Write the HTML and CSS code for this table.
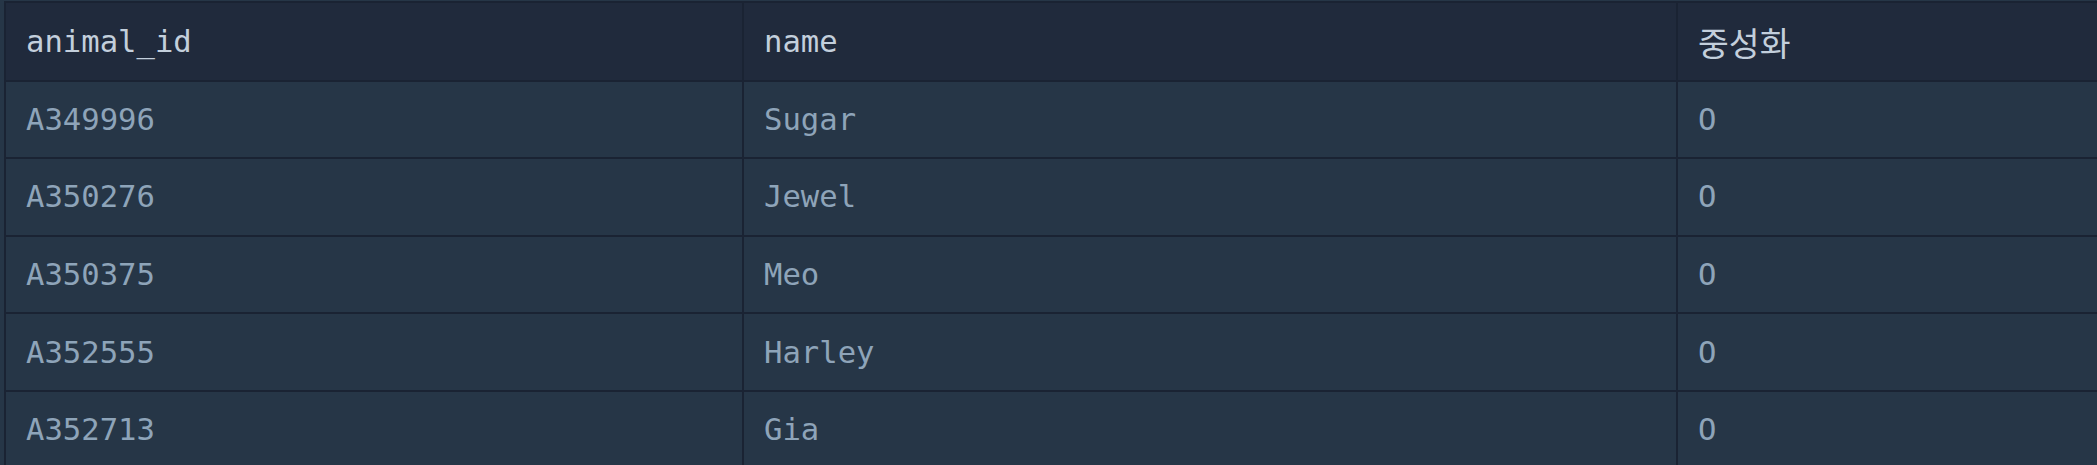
FILE: index.html
```html
<!DOCTYPE html>
<html lang="ko">
<head>
<meta charset="utf-8">
<link rel="stylesheet" href="styles.css">
</head>
<body>
<div class="wrap">
  <div class="table">
    <div class="cell head">animal_id</div>
    <div class="cell head">name</div>
    <div class="cell head"><span class="ko">중성화</span></div>

    <div class="cell">A349996</div>
    <div class="cell">Sugar</div>
    <div class="cell">O</div>

    <div class="cell">A350276</div>
    <div class="cell">Jewel</div>
    <div class="cell">O</div>

    <div class="cell">A350375</div>
    <div class="cell">Meo</div>
    <div class="cell">O</div>

    <div class="cell">A352555</div>
    <div class="cell">Harley</div>
    <div class="cell">O</div>

    <div class="cell">A352713</div>
    <div class="cell">Gia</div>
    <div class="cell">O</div>
  </div>
</div>
</body>
</html>
```
FILE: styles.css
```css
html, body {
  margin: 0;
  padding: 0;
  background: #263647;
  overflow: hidden;
}
.wrap {
  padding: 1px 0 0 4px;
}
.table {
  display: grid;
  grid-template-columns: 738px 934px 1fr;
  grid-auto-rows: 77.6px;
  grid-template-rows: 78.5px;
  border-left: 2px solid #1a2333;
  border-top: 2px solid #1a2333;
  width: 2200px;
}
.cell {
  display: flex;
  align-items: center;
  padding: 0 20px;
  border-right: 2px solid #1a2333;
  border-bottom: 2px solid #1a2333;
  font-family: "DejaVu Sans Mono", "Noto Sans CJK KR", monospace;
  font-size: 30.6px;
  color: #8ea4b9;
  background: #263647;
  white-space: nowrap;
}
.head {
  background: #202a3c;
  color: #c3cfdc;
}
.ko {
  font-family: "Noto Sans CJK KR", sans-serif;
  font-size: 33.5px;
}
```
